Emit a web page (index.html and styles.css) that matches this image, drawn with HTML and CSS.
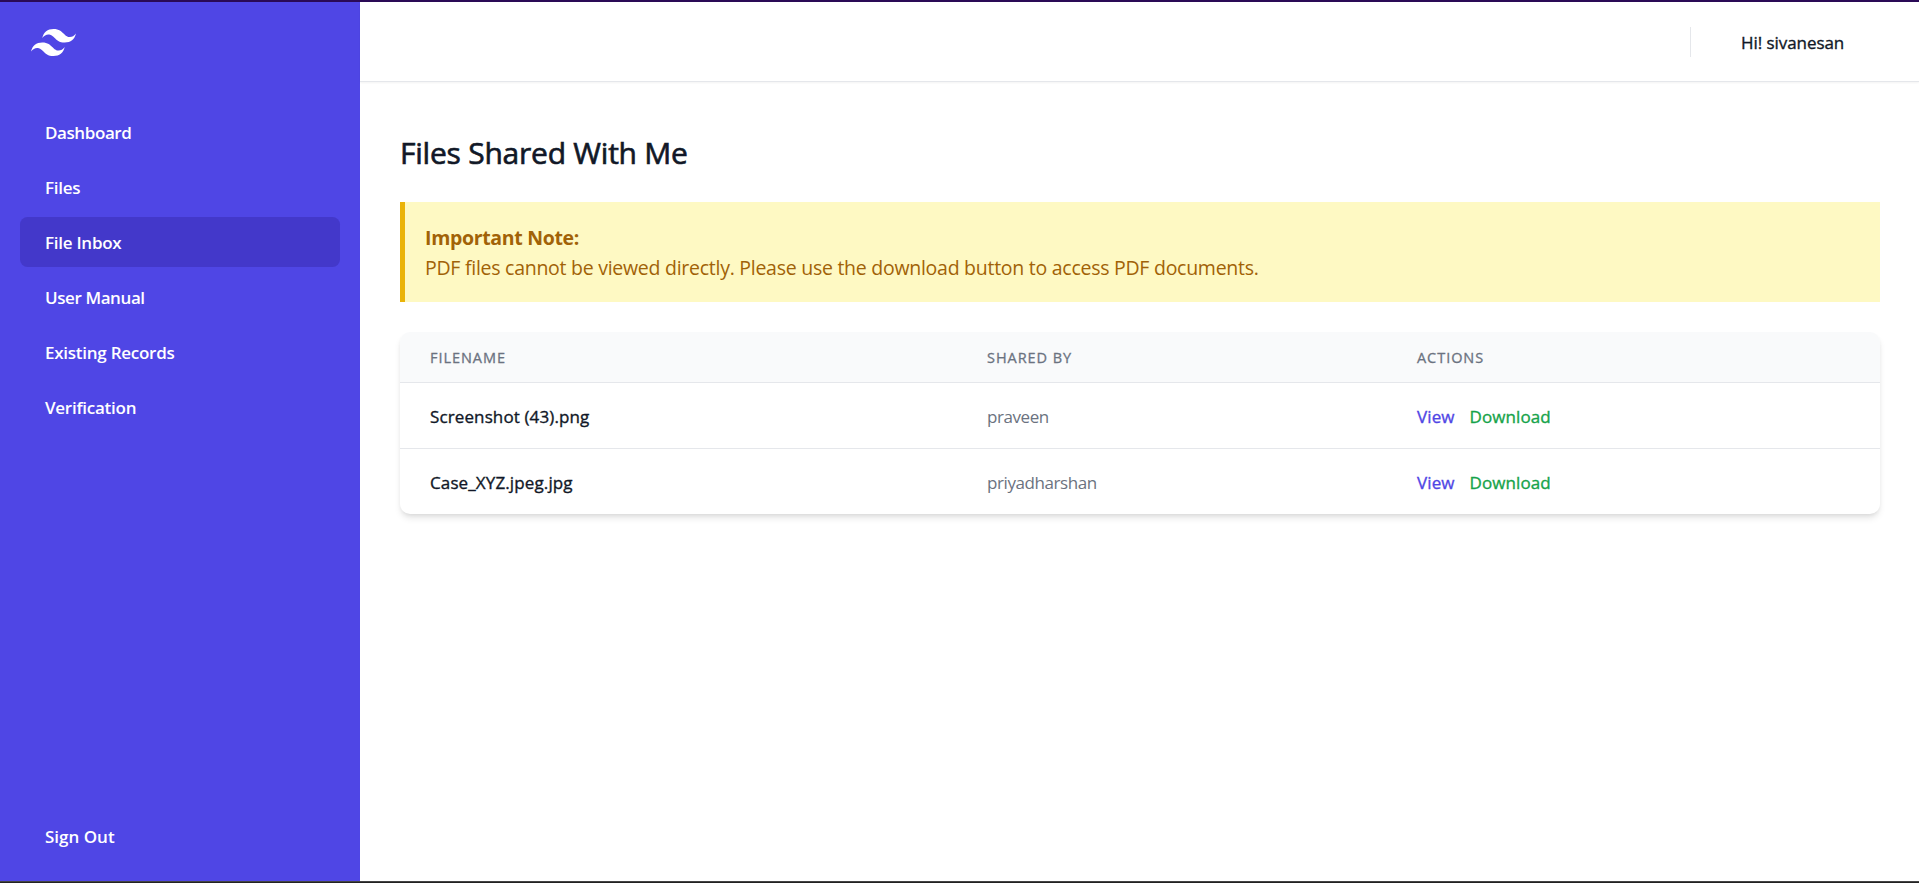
FILE: index.html
```
<!DOCTYPE html>
<html lang="en">
<head>
<meta charset="utf-8">
<title>File Inbox</title>
<link rel="stylesheet" href="styles.css">
</head>
<body>
<div class="app">
  <aside class="sidebar">
    <div class="brand">
      <svg class="logo" viewBox="0 0 54 33" aria-label="Logo"><path fill="currentColor" fill-rule="evenodd" d="M27 0c-7.2 0-11.7 3.6-13.5 10.8 2.7-3.6 5.85-4.95 9.45-4.05 2.054.513 3.522 2.004 5.147 3.653C30.744 13.09 33.808 16.2 40.5 16.2c7.2 0 11.7-3.6 13.5-10.8-2.7 3.6-5.85 4.95-9.45 4.05-2.054-.513-3.522-2.004-5.147-3.653C36.756 3.11 33.692 0 27 0zM13.5 16.2C6.3 16.2 1.8 19.8 0 27c2.7-3.6 5.85-4.95 9.45-4.05 2.054.514 3.522 2.004 5.147 3.653C17.244 29.29 20.308 32.4 27 32.4c7.2 0 11.7-3.6 13.5-10.8-2.7 3.6-5.85 4.95-9.45 4.05-2.054-.513-3.522-2.004-5.147-3.653C23.256 19.31 20.192 16.2 13.5 16.2z"/></svg>
    </div>
    <nav class="nav">
      <a class="nav-item tight">Dashboard</a>
      <a class="nav-item">Files</a>
      <a class="nav-item active">File Inbox</a>
      <a class="nav-item tight">User Manual</a>
      <a class="nav-item">Existing Records</a>
      <a class="nav-item">Verification</a>
      <a class="nav-item sign-out">Sign Out</a>
    </nav>
  </aside>
  <div class="page">
    <header class="topbar">
      <div class="divider"></div>
      <span class="greeting">Hi! sivanesan</span>
    </header>
    <main class="content">
      <h1 class="title">Files Shared With Me</h1>
      <div class="note">
        <p class="note-title">Important Note:</p>
        <p class="note-text">PDF files cannot be viewed directly. Please use the download button to access PDF documents.</p>
      </div>
      <div class="table">
        <div class="row head"><span>Filename</span><span>Shared By</span><span>Actions</span></div>
        <div class="row"><span class="name">Screenshot (43).png</span><span class="by">praveen</span><span class="actions"><a class="view">View</a><a class="download">Download</a></span></div>
        <div class="row"><span class="name">Case_XYZ.jpeg.jpg</span><span class="by">priyadharshan</span><span class="actions"><a class="view">View</a><a class="download">Download</a></span></div>
      </div>
    </main>
  </div>
</div>
</body>
</html>
```
FILE: styles.css
```
* { box-sizing: border-box; }
body {
  margin: 0;
  height: 883px;
  background: #222;
  color: #111827;
  font-family: "Open Sans", "Noto Sans", sans-serif;
  font-size: 17px;
  line-height: 25px;
  white-space: nowrap;
}
h1, p { margin: 0; }
.app {
  display: flex;
  height: 882px;
  background: #fff;
  border-top: 2px solid #2a0a56;
  border-bottom: 1px solid #444;
}
.sidebar {
  display: flex;
  flex-direction: column;
  width: 360px;
  padding: 0 20px;
  background: #4f46e5;
  color: #fff;
  font-weight: 600;
}
.brand { display: flex; align-items: center; height: 80px; padding: 1px 0 0 11px; }
.logo { width: 45px; height: 27.5px; }
.nav {
  flex: 1;
  display: flex;
  flex-direction: column;
  gap: 5px;
  padding: 25px 0 20px;
}
.nav-item {
  height: 50px;
  padding: 13px 25px 12px;
  border-radius: 7.5px;
  letter-spacing: -.26px;
}
.tight { letter-spacing: -.41px; }
.active { background: #4338ca; }
.sign-out { margin-top: auto; letter-spacing: 0; }
.page { flex: 1; display: flex; flex-direction: column; }
.topbar {
  display: flex;
  align-items: center;
  justify-content: flex-end;
  gap: 50px;
  height: 80px;
  padding-right: 73px;
  border-bottom: 1px solid #e5e7eb;
  box-shadow: 0 1px 2px rgba(0, 0, 0, .05);
}
.divider { width: 1px; height: 30px; background: #e5e7eb; }
.greeting { width: 105px; padding-top: 1px; letter-spacing: -.06px; }
/* Semi-heavy strokes for medium-weight labels */
.greeting, .name, .actions { -webkit-text-stroke: .35px currentColor; }
.content { padding: 50px 39px 0 40px; }
.title {
  height: 40px;
  margin-bottom: 30px;
  padding-top: 1px;
  font-size: 30px;
  line-height: 40px;
  font-weight: 400;
  letter-spacing: -.23px;
  -webkit-text-stroke: .65px currentColor;
}
.note {
  height: 100px;
  padding: 21px 20px 19px;
  border-left: 5px solid #eab308;
  background: #fef9c3;
  color: #a16207;
  font-size: 19.5px;
  line-height: 30px;
}
.note-title { font-weight: 700; letter-spacing: -.33px; }
.note-text { letter-spacing: -.265px; }
.table {
  margin-top: 30px;
  border-radius: 10px;
  overflow: hidden;
  background: #fff;
  box-shadow: 0 5px 7.5px -1px rgba(0, 0, 0, .1), 0 2.5px 5px -2.5px rgba(0, 0, 0, .1);
}
.row {
  display: grid;
  grid-template-columns: 557px 430px 1fr;
  align-items: center;
  height: 66px;
  padding: 2px 30px 0;
  border-top: 1px solid #e5e7eb;
}
.head {
  height: 50px;
  padding-top: 0;
  border-top: 0;
  background: #f9fafb;
  color: #6b7280;
  font-size: 14.5px;
  letter-spacing: .95px;
  text-transform: uppercase;
  -webkit-text-stroke: .3px currentColor;
}
.name { letter-spacing: .12px; }
.by { color: #6b7280; letter-spacing: -.42px; }
.actions { display: flex; gap: 15px; letter-spacing: .1px; }
.view { color: #4f46e5; }
.download { color: #16a34a; }
```
